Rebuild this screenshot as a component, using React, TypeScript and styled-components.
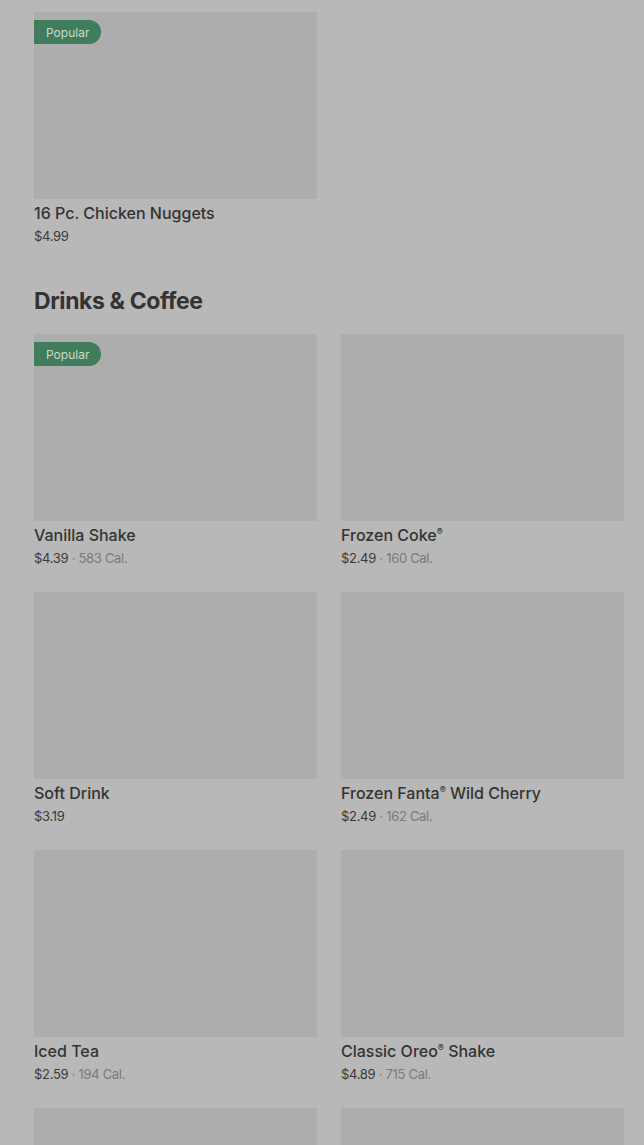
import React from 'react';
import styled, { createGlobalStyle } from 'styled-components';

const GlobalStyle = createGlobalStyle`
  html, body {
    margin: 0;
    padding: 0;
    background: #b8b8b8;
    overflow: hidden;
  }
  body {
    font-family: Inter, "Noto Sans", "Liberation Sans", sans-serif;
    color: #333333;
  }
`;

interface MenuItem {
  name: string;
  price: string;
  calories?: string;
  popular?: boolean;
}

const nuggets: MenuItem[] = [
  { name: '16 Pc. Chicken Nuggets', price: '$4.99', popular: true },
];

const drinks: MenuItem[] = [
  { name: 'Vanilla Shake', price: '$4.39', calories: '583 Cal.', popular: true },
  { name: 'Frozen Coke®', price: '$2.49', calories: '160 Cal.' },
  { name: 'Soft Drink', price: '$3.19' },
  { name: 'Frozen Fanta® Wild Cherry', price: '$2.49', calories: '162 Cal.' },
  { name: 'Iced Tea', price: '$2.59', calories: '194 Cal.' },
  { name: 'Classic Oreo® Shake', price: '$4.89', calories: '715 Cal.' },
  { name: 'Premium Roast Coffee', price: '$1.89', calories: '0 Cal.' },
  { name: 'Chocolate Shake', price: '$4.39', calories: '590 Cal.' },
];

const Page = styled.main`
  padding: 12px 20px 0 34px;
  display: flex;
  flex-direction: column;
  gap: 37px;
`;

const Section = styled.section`
  display: flex;
  flex-direction: column;
  gap: 17px;
`;

const Heading = styled.h2`
  margin: 0;
  font-size: 23px;
  line-height: 32px;
  font-weight: 700;
  letter-spacing: -0.4px;
  color: #333333;
`;

const Grid = styled.div`
  display: grid;
  grid-template-columns: repeat(2, 283px);
  column-gap: 24px;
  row-gap: 22px;
`;

const Card = styled.div`
  display: flex;
  flex-direction: column;
`;

const ImageBox = styled.div`
  position: relative;
  height: 187px;
  background: #adadad;
`;

const PopularBadge = styled.span`
  position: absolute;
  top: 8px;
  left: 0;
  height: 24px;
  padding: 0 12px;
  display: flex;
  align-items: center;
  background: #3f7d5c;
  color: #c9dccf;
  font-size: 12px;
  border-radius: 0 12px 12px 0;
`;

const Title = styled.div`
  margin-top: 3px;
  font-size: 16px;
  line-height: 22px;
  font-weight: 500;
  color: #333333;
`;

const Reg = styled.sup`
  font-size: 9px;
  line-height: 0;
  vertical-align: 6px;
`;

const PriceRow = styled.div`
  font-size: 13px;
  line-height: 24px;
  letter-spacing: -0.3px;
  color: #3a3a3a;
`;

const Calories = styled.span`
  color: #7a7a7a;
`;

// render "®" as a small superscript like the reference
const renderName = (name: string) =>
  name.split('®').map((part, i, arr) => (
    <React.Fragment key={i}>
      {part}
      {i < arr.length - 1 && <Reg>®</Reg>}
    </React.Fragment>
  ));

const ItemCard: React.FC<{ item: MenuItem }> = ({ item }) => (
  <Card>
    <ImageBox>{item.popular && <PopularBadge>Popular</PopularBadge>}</ImageBox>
    <Title>{renderName(item.name)}</Title>
    <PriceRow>
      {item.price}
      {item.calories && <Calories> · {item.calories}</Calories>}
    </PriceRow>
  </Card>
);

export default function App() {
  return (
    <>
      <GlobalStyle />
      <Page>
        <Grid>
          {nuggets.map((item) => (
            <ItemCard key={item.name} item={item} />
          ))}
        </Grid>
        <Section>
          <Heading>Drinks &amp; Coffee</Heading>
          <Grid>
            {drinks.map((item) => (
              <ItemCard key={item.name} item={item} />
            ))}
          </Grid>
        </Section>
      </Page>
    </>
  );
}
